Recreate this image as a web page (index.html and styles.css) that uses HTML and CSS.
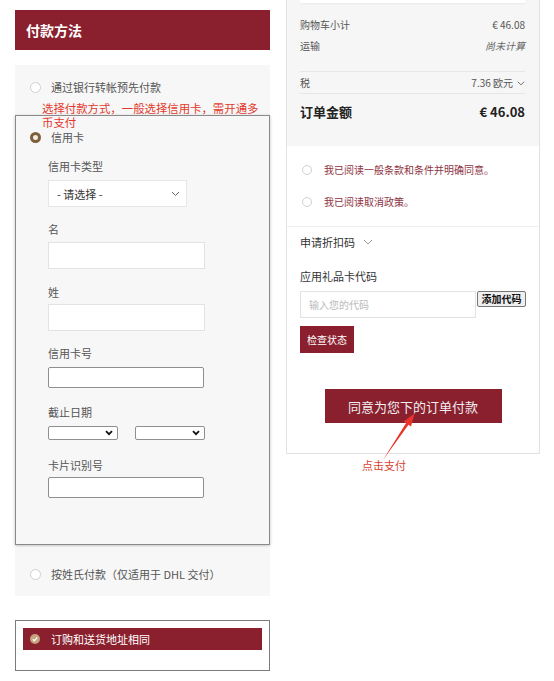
FILE: index.html
```html
<!DOCTYPE html>
<html lang="zh">
<head>
<meta charset="utf-8">
<title>付款方法</title>
<link rel="stylesheet" href="styles.css">
</head>
<body>
<div class="page">
  <div class="left">
    <div class="title">付款方法</div>
    <div class="bank">
      <div class="opt"><span class="radio"></span><span>通过银行转帐预先付款</span></div>
    </div>
    <div class="card">
      <div class="opt"><span class="radio on"></span><span>信用卡</span></div>
      <div class="fields">
        <div class="lbl l1">信用卡类型</div>
        <div class="sel">
          <span>- 请选择 -</span>
          <svg class="chev" width="9" height="6" viewBox="0 0 9 6"><path d="M1 1l3.5 3.5L8 1" fill="none" stroke="#666" stroke-width="1"/></svg>
        </div>
        <div class="lbl l2">名</div>
        <div class="inp"></div>
        <div class="lbl l3">姓</div>
        <div class="inp"></div>
        <div class="lbl l4">信用卡号</div>
        <div class="ninp"></div>
        <div class="lbl l5">截止日期</div>
        <div class="dates">
          <div class="nsel"><svg width="8" height="6" viewBox="0 0 8 6"><path d="M1 1.2l3 3 3-3" fill="none" stroke="#111" stroke-width="1.8"/></svg></div>
          <div class="nsel"><svg width="8" height="6" viewBox="0 0 8 6"><path d="M1 1.2l3 3 3-3" fill="none" stroke="#111" stroke-width="1.8"/></svg></div>
        </div>
        <div class="lbl l6">卡片识别号</div>
        <div class="ninp"></div>
      </div>
    </div>
    <div class="byname">
      <div class="opt"><span class="radio"></span><span>按姓氏付款（仅适用于 DHL 交付）</span></div>
    </div>
    <div class="same">
      <div class="bar">
        <span class="check"><svg width="10" height="10" viewBox="0 0 10 10"><path d="M2.8 5.2l1.6 1.5 2.9-3.3" fill="none" stroke="#fff" stroke-width="1.3"/></svg></span>
        <span>订购和送货地址相同</span>
      </div>
    </div>
  </div>

  <div class="right">
    <div class="sum">
      <div class="sum-top"></div>
      <div class="row r1"><span>购物车小计</span><span>€ 46.08</span></div>
      <div class="row r2"><span>运输</span><em>尚未计算</em></div>
      <div class="sep s1"></div>
      <div class="row r3"><span>税</span><span class="tax">7.36 欧元 <svg width="8" height="5" viewBox="0 0 8 5"><path d="M0.8 0.8l3.2 3 3.2-3" fill="none" stroke="#777" stroke-width="1"/></svg></span></div>
      <div class="sep s2"></div>
      <div class="row total"><span>订单金额</span><span>€ 46.08</span></div>
    </div>
    <div class="agree a1"><span class="radio sm"></span><span>我已阅读一般条款和条件并明确同意。</span></div>
    <div class="agree a2"><span class="radio sm"></span><span>我已阅读取消政策。</span></div>
    <div class="line"></div>
    <div class="disc">申请折扣码 <svg width="10" height="6" viewBox="0 0 10 6"><path d="M1 1l4 4 4-4" fill="none" stroke="#999" stroke-width="1"/></svg></div>
    <div class="gift">应用礼品卡代码</div>
    <div class="giftrow">
      <div class="gin">输入您的代码</div>
      <button class="add">添加代码</button>
    </div>
    <button class="status">检查状态</button>
    <button class="pay">同意为您下的订单付款</button>
  </div>

  <div class="note">选择付款方式，一般选择信用卡，需开通多币支付</div>
  <svg class="arrow" width="554" height="681" viewBox="0 0 554 681"><polygon points="383,460 408.5,424.7 411,426.4 414.5,413.5 403.6,421.4 406.1,423.1" fill="#e8342a"/></svg>
  <div class="tip">点击支付</div>
</div>
</body>
</html>
```

FILE: styles.css
```css
* { box-sizing: border-box; }
body {
  margin: 0;
  background: #fff;
  font-family: "Noto Sans CJK SC", "Liberation Sans", sans-serif;
  color: #555;
}
.page {
  position: relative;
  display: flex;
  align-items: flex-start;
  padding-left: 15px;
  height: 681px;
  overflow: hidden;
}

/* left column */
.left { width: 255px; margin-top: 10px; }
.title {
  height: 40px;
  background: #8a1f2e;
  color: #fff;
  font-size: 14px;
  font-weight: bold;
  padding-left: 11px;
  display: flex;
  align-items: center;
}
.bank {
  margin-top: 15px;
  height: 50px;
  background: #f7f7f7;
  padding-top: 15px;
}
.opt {
  display: flex;
  align-items: center;
  gap: 10px;
  padding-left: 15px;
  font-size: 11px;
  line-height: 14px;
  color: #555;
}
.radio {
  width: 11px;
  height: 11px;
  border: 1px solid #d0d0d0;
  border-radius: 50%;
  background: #fff;
  flex: none;
}
.radio.on {
  border: 3px solid #7d5f3c;
  background: #f3ece0;
}
.radio.sm { width: 10px; height: 10px; }

.card {
  height: 430px;
  border: 1px solid #8a8a8a;
  background: #f7f7f7;
  box-shadow: 0 1px 3px rgba(0,0,0,.25);
  padding-top: 14px;
}
.card .opt { padding-left: 14px; }
.fields { padding-left: 32px; }
.lbl { font-size: 11px; line-height: 14px; color: #555; margin-bottom: 7px; }
.l1 { margin-top: 15px; }
.l2 { margin-top: 15px; margin-bottom: 6px; }
.l3 { margin-top: 16px; margin-bottom: 5px; }
.l4 { margin-top: 15px; }
.l5 { margin-top: 17px; }
.l6 { margin-top: 18px; margin-bottom: 5px; }
.sel {
  width: 139px;
  height: 27px;
  background: #fff;
  border: 1px solid #e6e6e6;
  display: flex;
  align-items: center;
  justify-content: space-between;
  padding: 0 6px 0 8px;
  font-size: 11px;
  color: #333;
}
.inp {
  width: 157px;
  height: 27px;
  background: #fff;
  border: 1px solid #e3e3e3;
}
.ninp {
  width: 156px;
  height: 21px;
  background: #fff;
  border: 1px solid #8f8f8f;
  border-radius: 2px;
}
.dates { display: flex; gap: 17px; }
.nsel {
  width: 70px;
  height: 14px;
  background: #fff;
  border: 1px solid #8f8f8f;
  border-radius: 2px;
  display: flex;
  align-items: center;
  justify-content: flex-end;
  padding-right: 4px;
}
.byname {
  margin-top: 3px;
  height: 48px;
  background: #f7f7f7;
  padding-top: 19px;
}
.same {
  margin-top: 24px;
  height: 51px;
  border: 1px solid #7a7a7a;
  padding: 7px 7px 0;
}
.bar {
  height: 22px;
  background: #8a1f2e;
  color: #fff;
  font-size: 11px;
  display: flex;
  align-items: center;
  gap: 11px;
  padding-left: 7px;
}
.check {
  width: 10px;
  height: 10px;
  border-radius: 50%;
  background: #c7a37f;
  display: flex;
}

/* right panel */
.right {
  width: 254px;
  margin-left: 16px;
  height: 454px;
  border: 1px solid #e2e2e2;
  border-top: none;
  display: flex;
  flex-direction: column;
}
.sum {
  height: 146px;
  background: #f6f6f6;
  padding: 0 14px 0 13px;
}
.sum-top {
  height: 3px;
  background: #fff;
  box-shadow: 0 1px 2px rgba(0,0,0,.05);
}
.row {
  display: flex;
  justify-content: space-between;
  align-items: center;
  font-size: 10px;
  line-height: 14px;
  color: #555;
}
.row em { font-style: italic; color: #666; }
.r1 { margin-top: 15px; }
.r2 { margin-top: 7px; }
.r3 { margin-top: 4px; }
.tax { display: flex; align-items: center; gap: 4px; }
.sep { height: 1px; background: #e6e6e6; }
.s1 { margin-top: 18px; }
.s2 { margin-top: 3px; }
.total {
  margin-top: 9px;
  font-size: 13px;
  line-height: 18px;
  font-weight: bold;
  color: #222;
}
.agree {
  display: flex;
  align-items: center;
  gap: 12px;
  padding-left: 15px;
  font-size: 10px;
  line-height: 14px;
  color: #8e3443;
}
.a1 { margin-top: 17px; }
.a2 { margin-top: 18px; }
.line { height: 1px; background: #efefef; margin-top: 17px; }
.disc {
  margin-top: 7px;
  padding-left: 13px;
  font-size: 11px;
  line-height: 16px;
  color: #333;
  display: flex;
  align-items: center;
  gap: 8px;
}
.gift {
  margin-top: 19px;
  padding-left: 13px;
  font-size: 11px;
  line-height: 14px;
  color: #333;
}
.giftrow {
  margin-top: 8px;
  padding-left: 13px;
  display: flex;
  align-items: flex-start;
  gap: 1px;
}
.gin {
  width: 176px;
  height: 27px;
  border: 1px solid #e2e2e2;
  background: #fff;
  font-size: 10px;
  color: #bbb;
  display: flex;
  align-items: center;
  padding-left: 8px;
}
.add {
  width: 49px;
  height: 16px;
  padding: 0;
  font-family: inherit;
  font-size: 10px;
  font-weight: bold;
  color: #111;
  background: #efefef;
  border: 1px solid #767676;
  border-radius: 2px;
  line-height: 14px;
}
.status {
  margin: 8px 0 0 13px;
  width: 54px;
  height: 27px;
  padding: 0;
  border: none;
  background: #8a1f2e;
  color: #fff;
  font-family: inherit;
  font-size: 10px;
}
.pay {
  align-self: center;
  margin-top: 36px;
  width: 177px;
  height: 34px;
  padding: 0;
  border: none;
  background: #8a1f2e;
  color: #eee;
  font-family: inherit;
  font-size: 13px;
}

/* annotations */
.note {
  position: absolute;
  left: 42px;
  top: 101px;
  width: 222px;
  font-size: 11.4px;
  line-height: 14px;
  color: #e3392d;
}
.arrow { position: absolute; left: 0; top: 0; }
.tip {
  position: absolute;
  left: 362px;
  top: 458px;
  font-size: 11px;
  line-height: 14px;
  color: #d8432f;
}
```
